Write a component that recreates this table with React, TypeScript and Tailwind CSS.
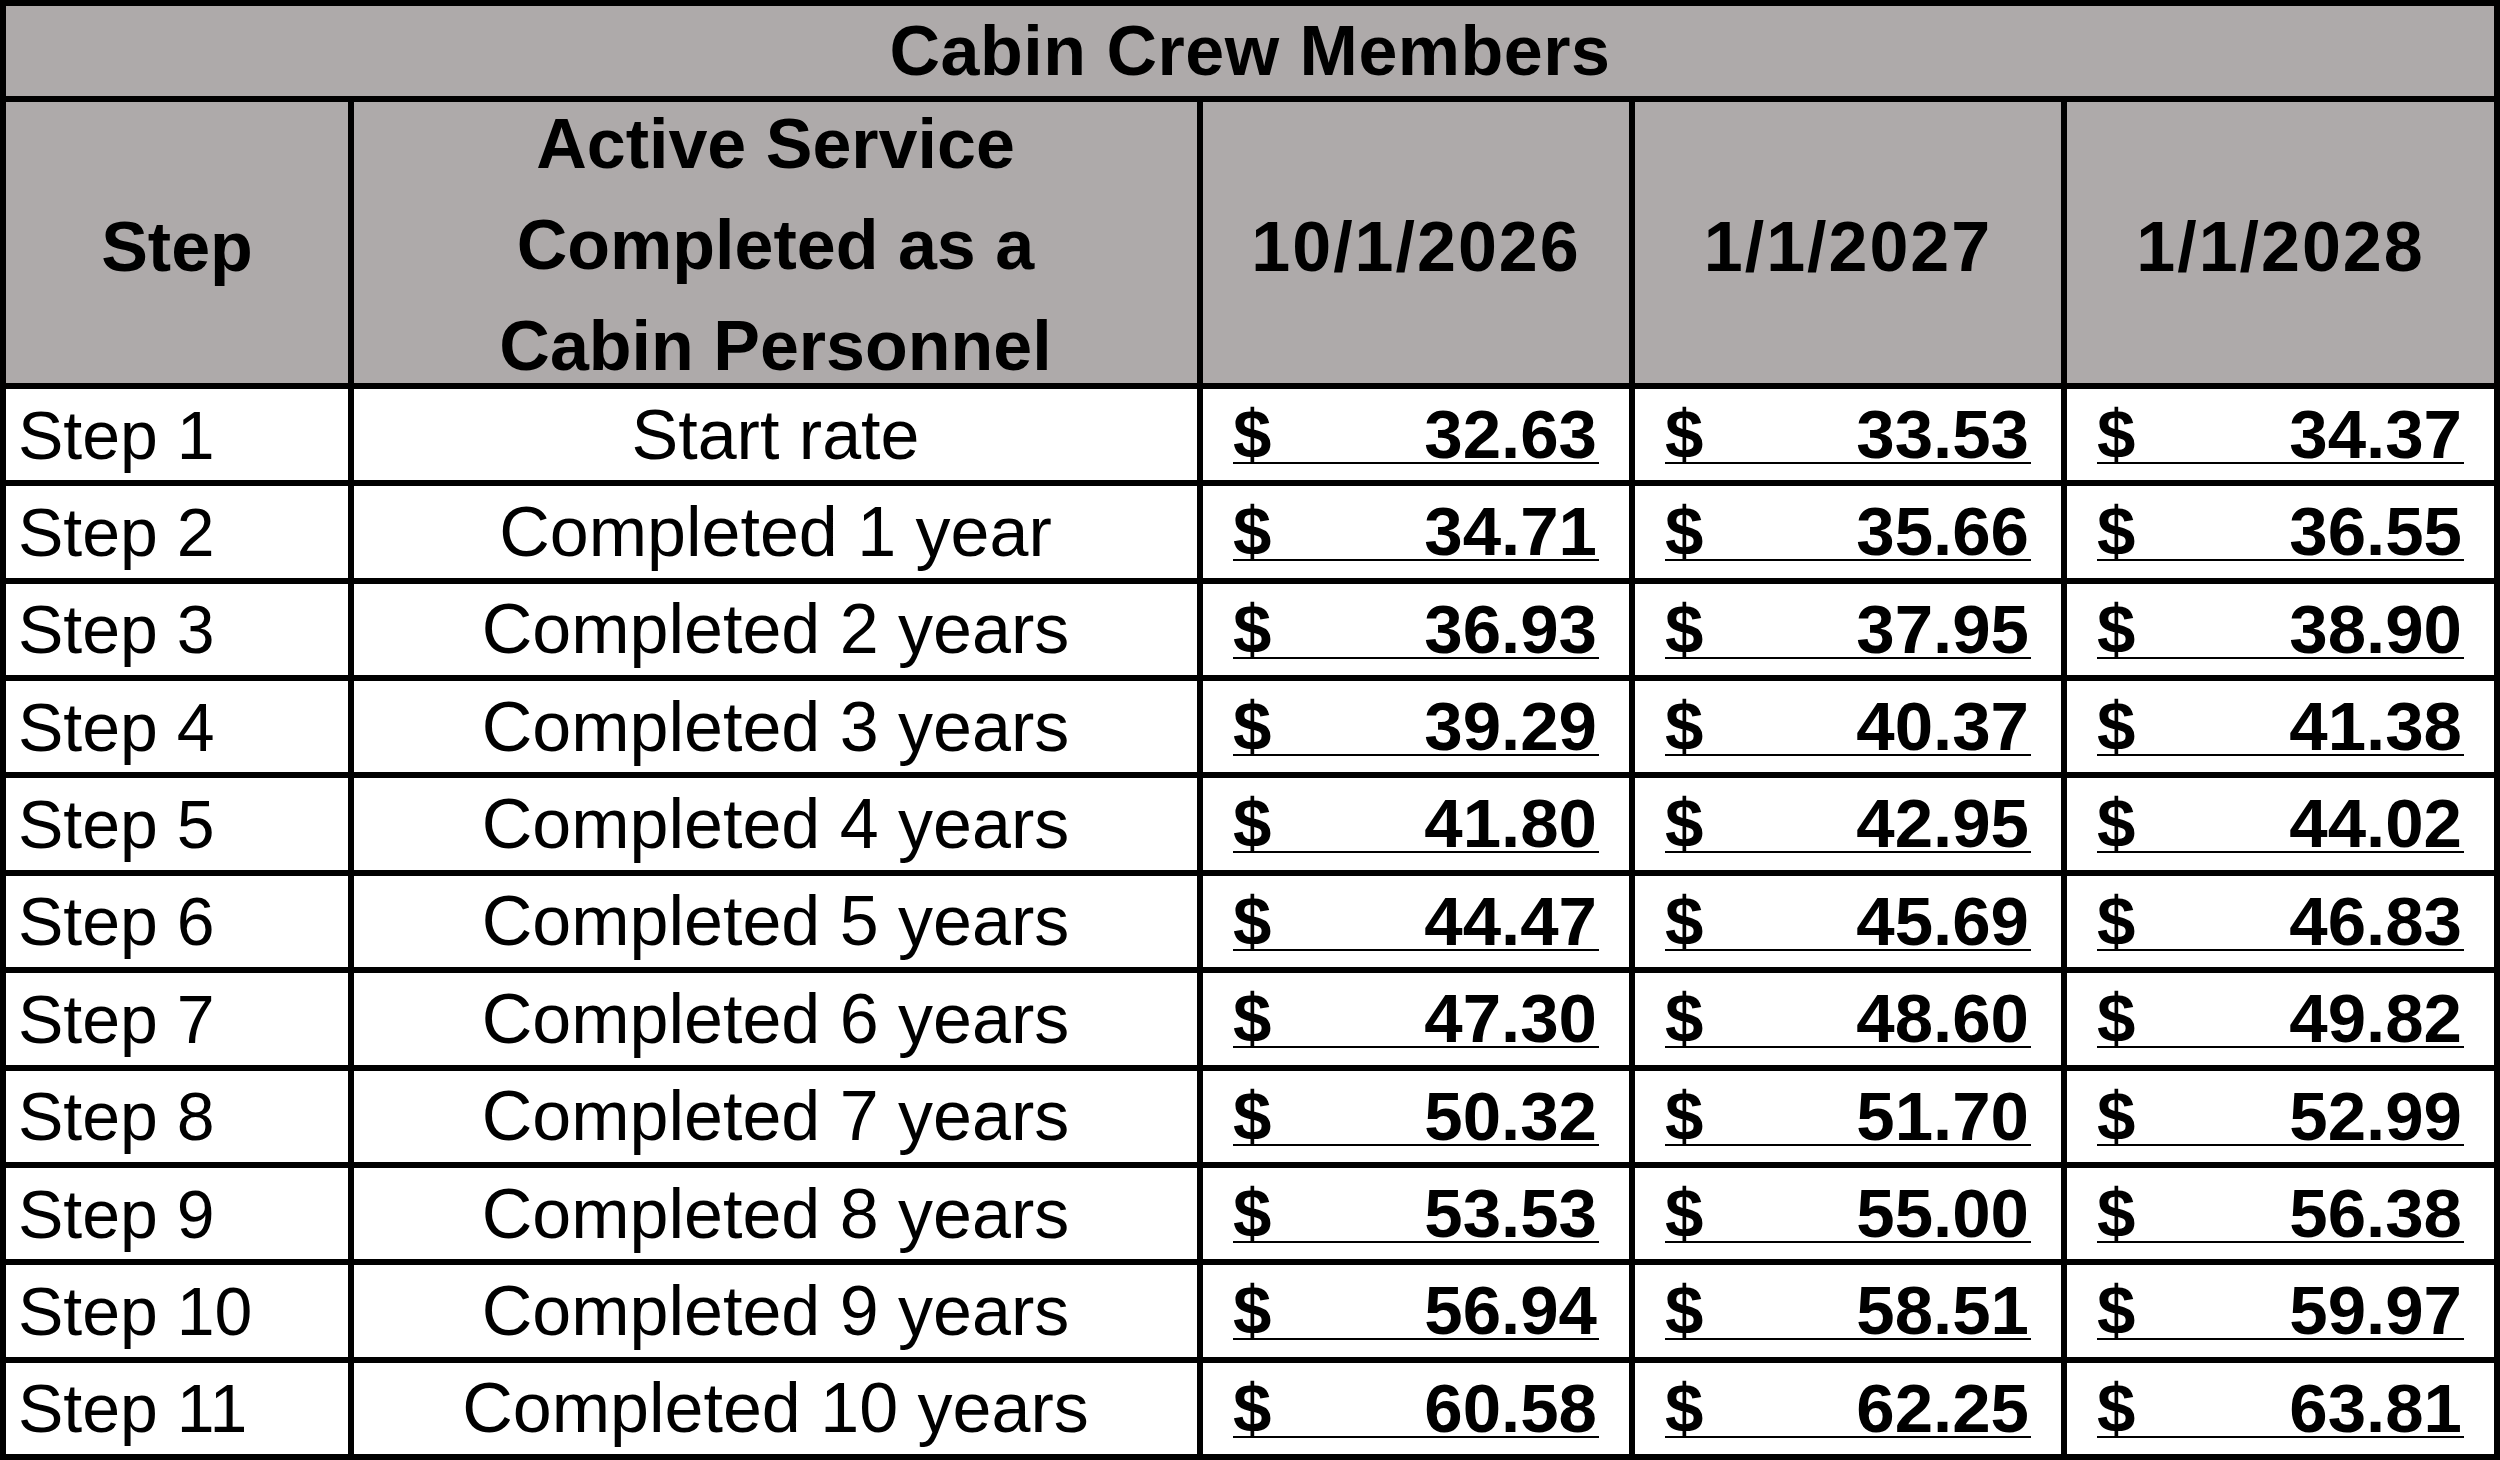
const rows = [
  ['Step 1', 'Start rate', '32.63', '33.53', '34.37'],
  ['Step 2', 'Completed 1 year', '34.71', '35.66', '36.55'],
  ['Step 3', 'Completed 2 years', '36.93', '37.95', '38.90'],
  ['Step 4', 'Completed 3 years', '39.29', '40.37', '41.38'],
  ['Step 5', 'Completed 4 years', '41.80', '42.95', '44.02'],
  ['Step 6', 'Completed 5 years', '44.47', '45.69', '46.83'],
  ['Step 7', 'Completed 6 years', '47.30', '48.60', '49.82'],
  ['Step 8', 'Completed 7 years', '50.32', '51.70', '52.99'],
  ['Step 9', 'Completed 8 years', '53.53', '55.00', '56.38'],
  ['Step 10', 'Completed 9 years', '56.94', '58.51', '59.97'],
  ['Step 11', 'Completed 10 years', '60.58', '62.25', '63.81'],
];

const dates = ['10/1/2026', '1/1/2027', '1/1/2028'];

function Money({ value }: { value: string }) {
  return (
    <div className="bg-white px-[30px] pt-[18px]">
      <div className="flex items-baseline justify-between border-b-2 border-black pr-[2px] text-[69px] font-bold leading-[55px]">
        <span>$</span>
        <span>{value}</span>
      </div>
    </div>
  );
}

export default function App() {
  return (
    <div className="font-['Liberation_Sans',Arial,sans-serif] text-black">
      <div className="grid h-[1460px] w-[2500px] grid-cols-[342px_843px_426px_426px_427px] grid-rows-[90px_281px_repeat(11,1fr)] gap-[6px] bg-black p-[6px]">
        <div className="col-span-5 flex items-center justify-center bg-[#aeaaaa] text-[70px] font-bold leading-none tracking-[0.5px]">
          Cabin Crew Members
        </div>
        <div className="flex items-center justify-center bg-[#aeaaaa] pt-[8px] text-[70px] font-bold leading-none">
          Step
        </div>
        <div className="flex items-center justify-center bg-[#aeaaaa] pt-[6px] text-center text-[70px] font-bold leading-[101px]">
          <div className="-my-[12px]">
            Active Service
            <br />
            Completed as a
            <br />
            Cabin Personnel
          </div>
        </div>
        {dates.map((d) => (
          <div
            key={d}
            className="flex items-center justify-center bg-[#aeaaaa] pt-[8px] text-[70px] font-bold leading-none tracking-[2px]"
          >
            {d}
          </div>
        ))}
        {rows.map((r) => (
          <div key={r[0]} className="contents">
            <div className="flex items-center bg-white pl-[12px] text-[68px] leading-none">{r[0]}</div>
            <div className="flex items-center justify-center bg-white text-[70px] leading-none">{r[1]}</div>
            <Money value={r[2]} />
            <Money value={r[3]} />
            <Money value={r[4]} />
          </div>
        ))}
      </div>
    </div>
  );
}
